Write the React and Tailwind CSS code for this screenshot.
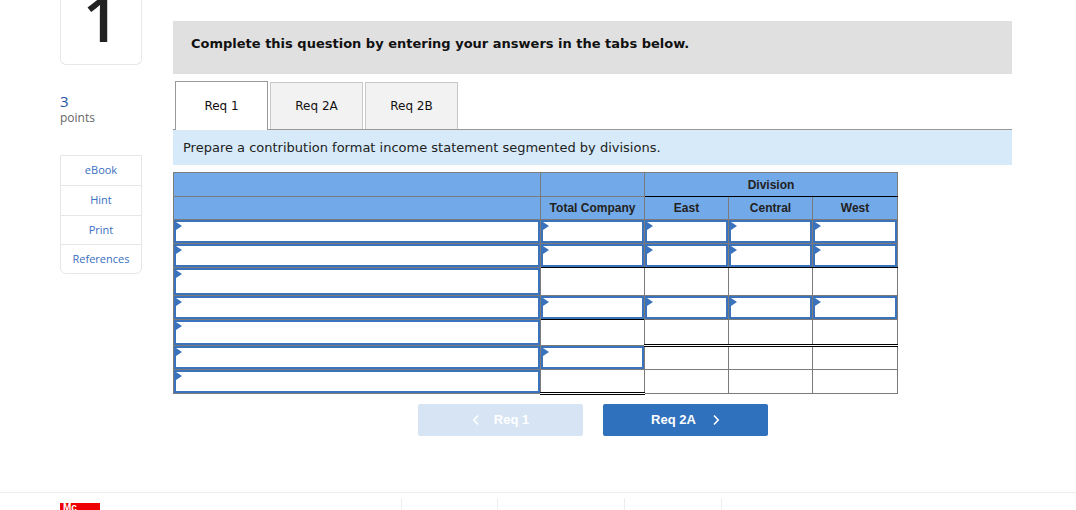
import React from "react";

const BLUE = "border-[#3a73bb]";

function Tri() {
  return (
    <span className="absolute left-0 top-0 h-0 w-0 border-y-[4px] border-y-transparent border-l-[6px] border-l-[#3a73bb]" />
  );
}

function InputBox({ h }) {
  return (
    <div className={`relative w-full border-2 ${BLUE} bg-white`} style={{ height: h }}>
      <Tri />
    </div>
  );
}

const rows = [
  { h: 24, nums: [true, true, true, true], bot: ["", "", "", ""] },
  { h: 24, nums: [true, true, true, true], bot: ["b", "b", "b", "b"] },
  { h: 28, nums: [false, false, false, false], bot: ["", "", "", ""] },
  { h: 24, nums: [true, true, true, true], bot: ["b", "b", "b", "b"] },
  { h: 26, nums: [false, false, false, false], bot: ["", "d", "d", "d"] },
  { h: 24, nums: [true, false, false, false], bot: ["", "", "", ""] },
  { h: 24, nums: [false, false, false, false], bot: ["d", "", "", ""] },
];

function botClass(b) {
  if (b === "b") return "border-b border-b-black";
  if (b === "d") return "border-b-[3px] border-double border-b-black";
  return "";
}

export default function App() {
  return (
    <div className="relative w-[1076px] h-[510px] overflow-hidden bg-white" style={{ fontFamily: '"DejaVu Sans", Verdana, sans-serif' }}>
      <div className="flex">
        {/* Left column */}
        <div className="ml-[60px] w-[82px] shrink-0">
          <div className="h-[65px] border-x border-b border-[#e8e8e8] rounded-b-md flex justify-center overflow-hidden">
            <span className="mt-[-14px] text-[64px] font-semibold leading-none text-[#222]" style={{ fontFamily: '"Open Sans", sans-serif' }}>1</span>
          </div>
          <div className="mt-[27px]" style={{ fontFamily: '"Open Sans", sans-serif' }}>
            <div className="text-[15px] leading-[18px] text-[#1f55a6]">3</div>
            <div className="text-[12px] leading-[16px] text-[#666]">points</div>
          </div>
          <div className="mt-[29px] border border-[#e6e6e6] rounded-b-md text-[11px] text-[#3b6fc0]" style={{ fontFamily: '"Open Sans", sans-serif' }}>
            <div className="h-[30px] flex items-center justify-center border-b border-[#e6e6e6]">eBook</div>
            <div className="h-[30px] flex items-center justify-center border-b border-[#e6e6e6]">Hint</div>
            <div className="h-[29px] flex items-center justify-center border-b border-[#e6e6e6]">Print</div>
            <div className="h-[28px] flex items-center justify-center">References</div>
          </div>
        </div>

        {/* Main column */}
        <div className="ml-[31px] w-[839px] shrink-0 pt-[21px]">
          <div className="h-[53px] bg-[#e0e0e0] flex items-center pl-[18px] pb-[8px] text-[13px] font-bold text-[#111]">
            Complete this question by entering your answers in the tabs below.
          </div>
          <div className="mt-[8px] flex items-end h-[48px] border-b border-[#999]">
            <div className="w-[2px] h-full" />
            <div className="w-[93px] h-[49px] -mb-px bg-white border-x border-t border-[#999] flex items-center justify-center text-[12px] text-[#111]">Req 1</div>
            <div className="ml-[2px] w-[93px] h-full bg-[#f2f2f2] border-x border-t border-[#c8c8c8] flex items-center justify-center text-[12px] text-[#111]">Req 2A</div>
            <div className="ml-[2px] w-[93px] h-full bg-[#f2f2f2] border-x border-t border-[#c8c8c8] flex items-center justify-center text-[12px] text-[#111]">Req 2B</div>
          </div>
          <div className="h-[35px] bg-[#d6eaf9] flex items-center pl-[10px] text-[13px] text-[#222]">
            Prepare a contribution format income statement segmented by divisions.
          </div>
          <table className="mt-[7px] table-fixed border-collapse w-[724px]" style={{ fontFamily: '"Liberation Sans", Arial, sans-serif' }}>
            <colgroup>
              <col className="w-[367px]" />
              <col className="w-[104px]" />
              <col className="w-[84px]" />
              <col className="w-[84px]" />
              <col className="w-[85px]" />
            </colgroup>
            <thead>
              <tr className="h-[24px] bg-[#72a9e8]">
                <th className="border border-[#7b7b7b] p-0" />
                <th className="border border-[#7b7b7b] p-0" />
                <th colSpan={3} className="border border-[#7b7b7b] border-b-black p-0 text-[12px] font-bold text-[#222] text-center">Division</th>
              </tr>
              <tr className="h-[23px] bg-[#72a9e8] text-[12px] font-bold text-[#222]">
                <th className="border border-[#7b7b7b] p-0" />
                <th className="border border-[#7b7b7b] p-0 text-center">Total Company</th>
                <th className="border border-[#7b7b7b] p-0 text-center">East</th>
                <th className="border border-[#7b7b7b] p-0 text-center">Central</th>
                <th className="border border-[#7b7b7b] p-0 text-center">West</th>
              </tr>
            </thead>
            <tbody>
              {rows.map((r, i) => (
                <tr key={i} style={{ height: r.h }}>
                  <td className="border border-[#7b7b7b] p-0 align-top">
                    <InputBox h={r.h - 1} />
                  </td>
                  {r.nums.map((n, j) => (
                    <td key={j} className={`border border-[#7b7b7b] p-0 align-top ${botClass(r.bot[j])}`}>
                      {n ? <InputBox h={r.h - 1} /> : null}
                    </td>
                  ))}
                </tr>
              ))}
            </tbody>
          </table>
          <div className="mt-[9px] flex justify-center gap-[20px] pl-[1px]" style={{ fontFamily: '"Liberation Sans", Arial, sans-serif' }}>
            <div className="w-[165px] h-[32px] rounded-[2px] bg-[#d6e4f3] flex items-center justify-center text-white text-[13px] font-bold">
              <svg width="8" height="12" viewBox="0 0 8 12" className="mr-[14px]"><path d="M6 1.5 L1.8 6 L6 10.5" fill="none" stroke="white" strokeWidth="1.6" /></svg>
              Req 1
            </div>
            <div className="w-[165px] h-[32px] rounded-[2px] bg-[#3071bd] flex items-center justify-center text-white text-[13px] font-bold">
              Req 2A
              <svg width="8" height="12" viewBox="0 0 8 12" className="ml-[16px]"><path d="M2 1.5 L6.2 6 L2 10.5" fill="none" stroke="white" strokeWidth="1.6" /></svg>
            </div>
          </div>
        </div>
      </div>

      {/* Footer */}
      <div className="absolute left-0 right-0 top-[492px] border-t border-[#ececec] h-[18px]">
        <div className="flex h-full pt-[5px]">
          <div className="ml-[60px] w-[40px] h-[20px] mt-[5px] bg-[#ee0000] text-white text-[10px] font-bold leading-[10px] pl-[3px]" style={{ fontFamily: '"Liberation Sans", Arial, sans-serif' }}>Mc</div>
          <div className="ml-[301px] w-px bg-[#ececec]" />
          <div className="ml-[95px] w-px bg-[#ececec]" />
          <div className="ml-[126px] w-px bg-[#ececec]" />
          <div className="ml-[96px] w-px bg-[#ececec]" />
        </div>
      </div>
    </div>
  );
}
